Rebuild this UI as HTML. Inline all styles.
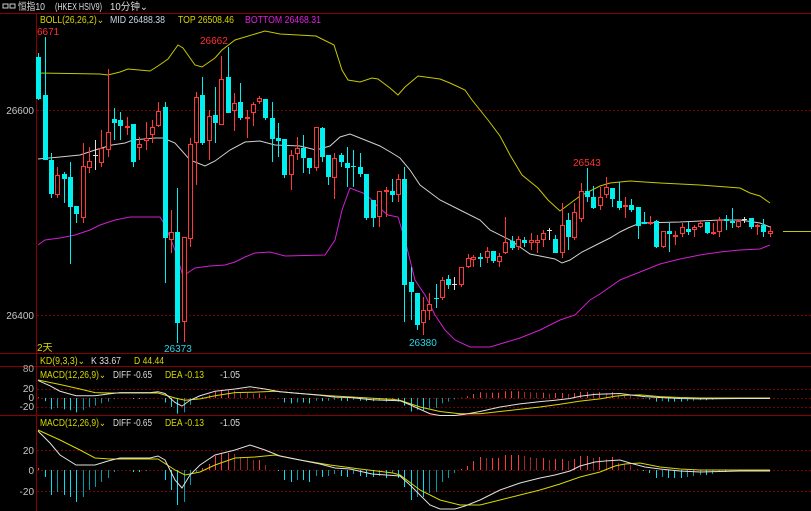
<!DOCTYPE html>
<html><head><meta charset="utf-8"><style>
html,body{margin:0;padding:0;background:#000;width:811px;height:511px;overflow:hidden}
svg{display:block}
text{font-family:"Liberation Sans","Noto Sans CJK SC",sans-serif;font-size:10px}
</style></head><body>
<svg id="s" width="811" height="511" xmlns="http://www.w3.org/2000/svg">
<rect width="811" height="511" fill="#000"/>
<!-- header -->
<rect x="3" y="4" width="5" height="4" fill="none" stroke="#ccc" stroke-width="1"/>
<rect x="10" y="4" width="5" height="4" fill="none" stroke="#ccc" stroke-width="1"/>
<text x="18" y="10" fill="#ddd" textLength="27" lengthAdjust="spacingAndGlyphs">恒指10</text>
<text x="55" y="10" fill="#ddd" textLength="47" lengthAdjust="spacingAndGlyphs">(HKEX HSIV9)</text>
<text x="110" y="10" fill="#ddd" textLength="38" lengthAdjust="spacingAndGlyphs">10分钟⌄</text>
<line x1="0" y1="13.5" x2="811" y2="13.5" stroke="#8a0000"/>
<line x1="36.5" y1="14" x2="36.5" y2="511" stroke="#8a0000"/>
<text x="40" y="23" fill="#d8d800" textLength="64" lengthAdjust="spacingAndGlyphs">BOLL(26,26,2)⌄</text>
<text x="110" y="23" fill="#c8d8e8" textLength="55" lengthAdjust="spacingAndGlyphs">MID 26488.38</text>
<text x="178" y="23" fill="#d8d800" textLength="56" lengthAdjust="spacingAndGlyphs">TOP 26508.46</text>
<text x="245" y="23" fill="#e020e0" textLength="76" lengthAdjust="spacingAndGlyphs">BOTTOM 26468.31</text>
<text x="37" y="35" fill="#ff3030">6671</text>
<!-- grid -->
<line x1="37" y1="110.5" x2="811" y2="110.5" stroke="#7a0000" stroke-dasharray="2,2"/>
<line x1="37" y1="315.5" x2="811" y2="315.5" stroke="#7a0000" stroke-dasharray="2,2"/>
<text x="34" y="114" fill="#c8c8c8" text-anchor="end">26600</text>
<text x="34" y="319" fill="#c8c8c8" text-anchor="end">26400</text>
<g id="bands" fill="none" stroke-width="1">
<polyline stroke="#c8c800" points="38,73 100,74 108,75 120,72 128,69 150,71 158,66 168,59 178,45 183,48 195,65 202,67 215,58 222,50 235,40 265,31 280,34 316,36 334,45 342,70 348,80 360,82 372,78 378,79 390,88 398,95 405,87 418,76 440,79 450,83 465,90 472,100 488,120 500,136 510,155 522,175 538,188 548,200 560,211 580,196 600,186 610,183 630,181 660,183 700,185 740,188 750,193 760,196 770,203"/>
<polyline stroke="#d0d0d0" points="38,159 60,157 80,155 95,150 112,145 125,143 133,140 155,138 163,138 175,143 190,160 205,166 215,161 230,150 245,142 260,141 275,145 300,146 316,150 330,146 340,137 350,134 360,138 380,146 392,153 400,158 410,170 420,185 440,200 460,210 480,220 490,230 510,240 530,254 545,257 555,259 562,263 570,260 582,252 598,244 610,238 620,232 628,228 640,223 680,222 720,220 740,220 760,223 770,227"/>
<polyline stroke="#d020d0" points="38,245 45,240 60,238 75,235 90,230 100,225 115,220 130,217 160,217 165,225 175,250 183,276 195,268 210,266 225,265 235,262 245,257 255,253 270,252 285,256 325,255 335,240 342,210 350,188 355,190 363,193 372,200 378,207 388,215 398,217 405,240 415,280 425,295 435,315 445,330 455,340 470,347 490,347 500,344 520,338 540,330 560,320 575,315 590,300 600,294 620,280 640,272 660,264 680,259 700,255 720,252 740,250 760,249 770,245"/>
<line x1="783" y1="231.5" x2="811" y2="231.5" stroke="#c8c800"/>
</g>
<g id="candles"></g>
<text x="200" y="44" fill="#ff3030">26662</text>
<text x="164" y="352" fill="#20d8e8">26373</text>
<text x="409" y="346" fill="#20d8e8">26380</text>
<text x="573" y="166" fill="#ff3030">26543</text>
<text x="37" y="351" fill="#d8d800">2天</text>
<!-- lower panels -->
<line x1="0" y1="353.5" x2="811" y2="353.5" stroke="#8a0000"/>
<line x1="0" y1="366.5" x2="811" y2="366.5" stroke="#8a0000"/>
<line x1="0" y1="415.5" x2="811" y2="415.5" stroke="#8a0000"/>
<text x="40" y="364" fill="#d8d800" textLength="45" lengthAdjust="spacingAndGlyphs">KD(9,3,3)⌄</text>
<text x="91" y="364" fill="#ddd" textLength="30" lengthAdjust="spacingAndGlyphs">K 33.67</text>
<text x="134" y="364" fill="#d8d800" textLength="30" lengthAdjust="spacingAndGlyphs">D 44.44</text>
<text x="40" y="378" fill="#d8d800" textLength="66" lengthAdjust="spacingAndGlyphs">MACD(12,26,9)⌄</text>
<text x="113" y="378" fill="#ddd" textLength="39" lengthAdjust="spacingAndGlyphs">DIFF -0.65</text>
<text x="165" y="378" fill="#d8d800" textLength="39" lengthAdjust="spacingAndGlyphs">DEA -0.13</text>
<text x="220" y="378" fill="#ddd" textLength="20" lengthAdjust="spacingAndGlyphs">-1.05</text>
<text x="40" y="426" fill="#d8d800" textLength="66" lengthAdjust="spacingAndGlyphs">MACD(12,26,9)⌄</text>
<text x="113" y="426" fill="#ddd" textLength="39" lengthAdjust="spacingAndGlyphs">DIFF -0.65</text>
<text x="165" y="426" fill="#d8d800" textLength="39" lengthAdjust="spacingAndGlyphs">DEA -0.13</text>
<text x="220" y="426" fill="#ddd" textLength="20" lengthAdjust="spacingAndGlyphs">-1.05</text>
<text x="34" y="372" fill="#aaa" text-anchor="end">80</text>
<text x="34" y="392" fill="#c8c8c8" text-anchor="end">20</text>
<text x="34" y="401" fill="#c8c8c8" text-anchor="end">0</text>
<text x="34" y="410" fill="#c8c8c8" text-anchor="end">-20</text>
<text x="34" y="454" fill="#c8c8c8" text-anchor="end">20</text>
<text x="34" y="474" fill="#c8c8c8" text-anchor="end">0</text>
<text x="34" y="495" fill="#c8c8c8" text-anchor="end">-20</text>
<g stroke="#7a0000" stroke-dasharray="2,2">
<line x1="37" y1="389.5" x2="811" y2="389.5"/><line x1="37" y1="398.5" x2="811" y2="398.5"/><line x1="37" y1="407.5" x2="811" y2="407.5"/>
<line x1="37" y1="450.5" x2="811" y2="450.5"/><line x1="37" y1="470.5" x2="811" y2="470.5"/><line x1="37" y1="491.5" x2="811" y2="491.5"/>
</g>
<g id="p1" transform="translate(0,398) scale(1,0.45) translate(0,-470)"></g>
<g id="p2"></g>
</svg>
<script>
var NS="http://www.w3.org/2000/svg";
function el(p,t,a){var e=document.createElementNS(NS,t);for(var k in a)e.setAttribute(k,a[k]);p.appendChild(e);return e;}
var C=[
['c',38,57,99,53,100],['c',45,95,160,37,160],['c',51,160,194,153,198],['r',57,175,195,167,198],['c',64,174,179,172,203],['c',70,177,207,162,264],['c',76,206,214,206,223],['r',83,166,218,143,223],['r',89,161,168,147,173],['w',95,155,155,140,170],['r',101,148,163,130,167],['r',108,132,150,69,157],['c',114,119,123,108,140],['c',120,120,126,112,140],['r',127,126,128,117,135],['c',133,124,162,124,167],['r',139,144,148,137,160],['r',146,138,141,122,150],['r',152,127,135,120,143],['r',158,111,126,102,127],['c',165,107,238,102,283],['r',171,232,240,210,253],['c',177,232,323,188,343],['r',184,237,322,237,342],['r',190,144,239,138,247],['r',196,97,143,92,185],['c',202,95,143,77,145],['r',209,116,141,110,160],['c',215,115,123,87,143],['r',221,79,125,56,125],['c',228,77,113,47,113],['r',234,103,111,93,131],['c',240,102,118,83,120],['r',247,117,119,110,138],['r',253,104,113,102,126],['r',259,98,102,96,104],['c',265,99,118,99,120],['c',272,118,139,102,162],['c',278,138,141,123,157],['c',284,139,175,139,178],['r',291,155,175,150,190],['r',297,148,154,137,160],['c',303,148,158,135,173],['c',309,158,168,158,174],['r',316,127,168,127,171],['c',322,128,157,127,162],['c',328,155,177,155,185],['r',334,158,178,153,199],['c',341,155,162,153,167],['c',347,163,168,147,187],['c',353,166,167,150,187],['c',360,167,174,153,177],['c',366,174,218,174,220],['c',373,200,218,200,227],['r',379,191,217,191,227],['r',386,190,191,187,217],['c',392,191,195,179,202],['r',398,179,195,174,202],['c',404,179,285,167,322],['c',411,282,292,267,320],['c',417,293,325,293,330],['r',423,310,323,297,335],['r',429,304,311,293,320],['c',436,298,299,284,308],['r',442,280,298,277,300],['c',448,279,285,275,289],['w',454,284,284,277,290],['r',461,267,285,267,287],['r',468,258,267,254,268],['r',473,257,260,255,267],['c',480,257,259,253,267],['r',487,251,258,247,263],['c',493,251,261,251,263],['r',499,256,262,253,267],['r',505,242,253,217,254],['c',512,241,248,236,250],['r',518,239,247,236,250],['c',524,240,243,237,247],['r',531,240,243,233,250],['r',537,240,243,235,253],['r',543,233,240,230,247],['w',549,230,230,228,240],['c',555,239,253,235,253],['r',562,225,253,203,258],['c',568,220,237,213,250],['r',574,212,238,203,240],['r',581,191,219,183,222],['c',587,191,197,168,202],['c',593,197,208,186,209],['r',600,197,206,187,210],['r',606,187,195,177,198],['c',612,188,199,188,207],['c',619,201,208,182,210],['r',625,205,206,197,218],['c',631,205,210,199,212],['c',638,207,226,207,239],['c',644,222,224,212,224],['r',650,222,224,216,225],['c',656,221,247,220,248],['r',663,231,247,231,248],['c',669,231,234,223,252],['r',675,235,237,231,245],['r',682,227,234,223,237],['c',688,229,232,222,235],['r',694,227,230,225,237],['r',700,223,227,220,228],['c',707,222,233,222,234],['r',713,232,234,223,235],['r',719,220,232,217,237],['c',726,219,221,215,230],['c',732,221,223,208,228],['r',738,221,227,220,228],['w',744,219,219,217,223],['c',751,218,227,218,229],['r',757,225,227,224,235],['c',763,225,232,219,237],['r',770,231,234,226,237]];
var g=document.getElementById('candles');
C.forEach(function(c){var t=c[0],x=c[1],o=c[2],cl=c[3],h=c[4],l=c[5];
 var col=t=='c'?'#00f0f0':t=='r'?'#ff3838':'#e0e0e0';
 var top=Math.min(o,cl),bot=Math.max(o,cl);
 el(g,'line',{x1:x+.5,y1:h,x2:x+.5,y2:l,stroke:col});
 if(t=='w'){el(g,'line',{x1:x-2,y1:o+.5,x2:x+3,y2:o+.5,stroke:col});}
 else if(t=='c'){el(g,'rect',{x:x-2,y:top,width:5,height:Math.max(1,bot-top),fill:col});}
 else{el(g,'rect',{x:x-1.5,y:top+.5,width:4,height:Math.max(1,bot-top-1),fill:'#000',stroke:col});}
});
var H=[[38,2],[45,-7],[51,-25],[57,-22],[64,-25],[70,-27],[76,-32],[83,-27],[89,-20],[95,-17],[101,-12],[108,-8],[114,-2],[133,-2],[139,-2],[146,-1],[165,-10],[171,-20],[177,-35],[184,-32],[190,-15],[196,-2],[202,2],[209,6],[215,14],[221,17],[228,17],[234,16],[240,13],[247,12],[253,10],[259,10],[265,5],[278,-1],[284,-10],[291,-12],[297,-10],[303,-10],[309,-12],[316,-6],[322,-7],[328,-6],[334,-4],[341,-6],[347,-7],[353,-4],[360,-6],[366,-7],[373,-7],[379,-6],[386,-8],[392,-3],[398,-8],[404,-17],[411,-30],[417,-27],[423,-27],[429,-23],[436,-22],[442,-12],[448,-8],[454,-3],[461,1],[467,4],[473,9],[480,13],[486,12],[492,12],[498,12],[505,15],[511,15],[518,15],[524,14],[530,13],[536,12],[543,12],[549,10],[555,11],[562,11],[568,9],[574,11],[580,14],[587,14],[593,12],[599,13],[606,11],[612,13],[618,7],[624,6],[630,5],[637,1],[643,-1],[649,-3],[656,-8],[662,-7],[668,-8],[674,-8],[681,-8],[687,-7],[693,-6],[700,-5],[706,-5],[712,-4],[719,-2],[725,-2],[731,-1],[738,-1]];
var DIFF="38,431 50,443 60,455 76,465 95,465 108,461 120,458 150,458 158,456 165,460 175,480 182,488 190,475 200,465 215,455 235,450 250,445 265,450 280,456 300,460 320,464 335,468 350,469 372,474 400,476 410,485 420,495 430,505 440,509 455,509 465,506 480,500 500,490 520,483 540,478 555,475 570,471 580,466 595,462 605,461 620,460 630,463 645,467 660,469 680,471 700,472 740,471 770,471";
var DEA="38,430 60,440 80,450 95,458 110,459 158,459 175,470 185,475 200,472 215,465 235,458 255,457 275,455 300,460 330,465 360,469 393,473 400,475 420,490 440,500 460,505 480,505 500,500 520,495 540,490 560,484 580,477 600,472 615,466 625,464 640,463 660,467 680,469 700,470 770,470";
['p1','p2'].forEach(function(id){var p=document.getElementById(id);
 H.forEach(function(h,i){var v=h[1];var prev=i?H[i-1][1]:0;
  var col=v>=0?(v>=prev?'#ff3838':'#a02828'):(v<=prev?'#00e0f0':'#009aa8');
  el(p,'line',{x1:h[0]+.5,y1:470,x2:h[0]+.5,y2:470-v,stroke:col,'vector-effect':'non-scaling-stroke'});});
 el(p,'polyline',{points:DEA,fill:'none',stroke:'#d8d800','vector-effect':'non-scaling-stroke'});
 el(p,'polyline',{points:DIFF,fill:'none',stroke:'#e0e0e0','vector-effect':'non-scaling-stroke'});
});
</script>
</body></html>
